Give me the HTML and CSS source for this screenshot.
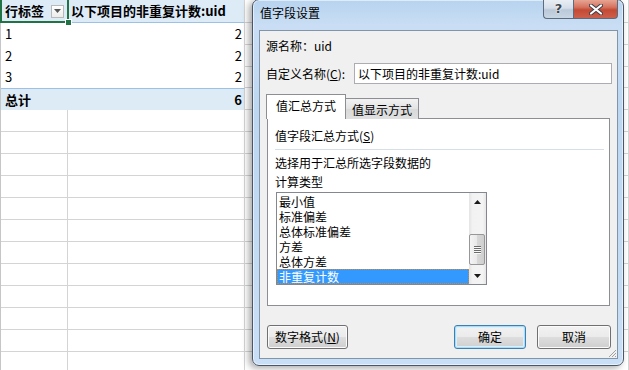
FILE: index.html
```html
<!DOCTYPE html>
<html lang="zh-CN">
<head>
<meta charset="utf-8">
<title>值字段设置</title>
<link rel="stylesheet" href="styles.css">
</head>
<body>
<div class="sheet">
  <div class="c hd first">行标签<span class="dd"><svg width="7" height="4" viewBox="0 0 7 4"><path d="M0 0H7L3.5 4Z" fill="#555"/></svg></span></div>
  <div class="c hd bcol bold">以下项目的非重复计数:uid</div>
  <div class="c g"></div>

  <div class="c">1</div><div class="c bcol num">2</div><div class="c g"></div>
  <div class="c">2</div><div class="c bcol num">2</div><div class="c g"></div>
  <div class="c">3</div><div class="c bcol num">2</div><div class="c g"></div>

  <div class="c tot bold">总计</div><div class="c tot bcol num bold">6</div><div class="c g"></div>

  <div class="c g"></div><div class="c g"></div><div class="c g"></div>
  <div class="c g"></div><div class="c g"></div><div class="c g"></div>
  <div class="c g"></div><div class="c g"></div><div class="c g"></div>
  <div class="c g"></div><div class="c g"></div><div class="c g"></div>
  <div class="c g"></div><div class="c g"></div><div class="c g"></div>
  <div class="c g"></div><div class="c g"></div><div class="c g"></div>
  <div class="c g"></div><div class="c g"></div><div class="c g"></div>
  <div class="c g"></div><div class="c g"></div><div class="c g"></div>
  <div class="c g"></div><div class="c g"></div><div class="c g"></div>
  <div class="c g"></div><div class="c g"></div><div class="c g"></div>
  <div class="c g"></div><div class="c g"></div><div class="c g"></div>
  <div class="c g"></div><div class="c g"></div><div class="c g"></div>
</div>
<div class="selbox"><span class="handle"></span></div>

<div class="dlg">
  <div class="titlebar">
    <span class="title">值字段设置</span>
    <div class="capbtns">
      <span class="help">?</span>
      <span class="close"><svg width="14" height="11" viewBox="0 0 14 11"><path d="M2 1.5L12 9.5M12 1.5L2 9.5" stroke="#3a3f4a" stroke-width="4" stroke-linecap="round"/><path d="M2 1.5L12 9.5M12 1.5L2 9.5" stroke="#fff" stroke-width="2.2" stroke-linecap="round"/></svg></span>
    </div>
  </div>
  <div class="client">
    <div class="src">源名称：uid</div>
    <div class="custom">
      <span class="lbl">自定义名称(<u>C</u>):</span>
      <div class="input">以下项目的非重复计数:uid</div>
    </div>
    <div class="tabs">
      <div class="tab on">值汇总方式</div>
      <div class="tab">值显示方式</div>
    </div>
    <div class="panel">
      <div class="group">值字段汇总方式(<u>S</u>)</div>
      <div class="sep"></div>
      <div class="desc">选择用于汇总所选字段数据的<br>计算类型</div>
      <div class="list">
        <div class="items">
          <div class="item"><span class="it">最小值</span></div>
          <div class="item"><span class="it">标准偏差</span></div>
          <div class="item"><span class="it">总体标准偏差</span></div>
          <div class="item"><span class="it">方差</span></div>
          <div class="item"><span class="it">总体方差</span></div>
          <div class="item selitem"><span class="it">非重复计数</span></div>
        </div>
        <div class="sb">
          <div class="arrow"><svg width="7" height="4" viewBox="0 0 7 4"><path d="M0 4H7L3.5 0Z" fill="#1a1a1a"/></svg></div>
          <div class="track t1"></div>
          <div class="thumb"><span></span><span></span><span></span><span></span></div>
          <div class="track t2"></div>
          <div class="arrow"><svg width="7" height="4" viewBox="0 0 7 4"><path d="M0 0H7L3.5 4Z" fill="#1a1a1a"/></svg></div>
        </div>
      </div>
    </div>
    <div class="btns">
      <div class="btn numfmt">数字格式(<u>N</u>)</div>
      <div class="spacer"></div>
      <div class="btn def">确定</div>
      <div class="btn cancel">取消</div>
    </div>
    <svg class="grip" width="9" height="9" viewBox="0 0 9 9"><path d="M8 1L1 8M8 4L4 8M8 7L7 8" stroke="#a0a0a0" stroke-width="1"/></svg>
  </div>
</div>
</body>
</html>
```

FILE: styles.css
```css
* { box-sizing: border-box; margin: 0; padding: 0; }

body {
  width: 629px;
  height: 370px;
  overflow: hidden;
  background: #fff;
  position: relative;
  font-family: "Noto Sans CJK SC", "Microsoft YaHei", sans-serif;
  color: #000;
}

/* ---------- spreadsheet ---------- */
.sheet {
  display: grid;
  grid-template-columns: 67px 177px 384px;
  grid-template-rows: 23px 22px 22px 21px 22px;
  grid-auto-rows: 22px;
  border-left: 1px solid #c6c6c6;
  font-size: 13px;
  line-height: 16px;
}

.c {
  display: flex;
  align-items: flex-end;
  padding: 0 3px 3px 4px;
  white-space: nowrap;
}

.hd {
  background: #ddebf7;
  border-bottom: 1px solid #9bc2e6;
  font-weight: bold;
  align-items: center;
  padding-bottom: 0;
}

.first { justify-content: space-between; padding-right: 4px; }

.dd {
  width: 13px;
  height: 13px;
  border: 1px solid #b9b9b9;
  background: linear-gradient(#ffffff, #ececec);
  display: flex;
  align-items: center;
  justify-content: center;
}

.bold { font-weight: bold; }

.bcol { border-right: 1px solid #d4d4d4; padding-left: 3px; }

.num { justify-content: flex-end; padding-right: 2px; }

.tot {
  background: #ddebf7;
  border-top: 1px solid #9bc2e6;
  align-items: center;
  padding-bottom: 0;
}

.g {
  border-right: 1px solid #d4d4d4;
  border-bottom: 1px solid #d4d4d4;
}

.selbox {
  position: absolute;
  left: 0;
  top: -2px;
  width: 69px;
  height: 25px;
  border: 2px solid #217346;
}

.handle {
  position: absolute;
  right: -5px;
  bottom: -5px;
  width: 7px;
  height: 7px;
  background: #217346;
  border: 1px solid #fff;
}

/* ---------- dialog ---------- */
.dlg {
  position: absolute;
  left: 252px;
  top: -1px;
  width: 372px;
  height: 367px;
  border: 1px solid #4a5768;
  border-radius: 7px;
  background: linear-gradient(180deg, #b7d3ef 0%, #c9def4 7%, #bdd7f1 30%, #c3dbf3 70%, #c9dff5 100%);
  box-shadow: -3px 2px 7px rgba(0, 0, 0, 0.35), inset 0 0 0 1px rgba(255, 255, 255, 0.55);
  padding: 0 5px 6px 6px;
  display: flex;
  flex-direction: column;
  font-size: 12px;
  line-height: 16px;
}

.titlebar {
  height: 30px;
  position: relative;
  padding: 5px 0 0 1px;
  flex: none;
}

.title { font-size: 12px; }

.capbtns {
  position: absolute;
  right: 0;
  top: 0;
  display: flex;
  height: 19px;
}

.help, .close {
  display: flex;
  align-items: center;
  justify-content: center;
  height: 19px;
  border: 1px solid #5d6b7c;
  border-top: none;
}

.help {
  width: 30px;
  border-radius: 0 0 0 4px;
  border-right: none;
  background: linear-gradient(#e9eef4 0%, #d5dee9 45%, #bac8d8 55%, #c9d6e4 100%);
  font-family: "DejaVu Sans", sans-serif;
  font-weight: bold;
  font-size: 13px;
  color: #40484f;
  text-shadow: 0 0 2px #fff, 0 0 1px #fff;
  padding-bottom: 1px;
}

.close {
  width: 45px;
  border-radius: 0 0 4px 0;
  background: linear-gradient(#e7a593 0%, #d5735f 40%, #c44a35 55%, #cd5f4a 100%);
}

.client {
  flex: 1;
  position: relative;
  background: #f0f0f0;
  border: 1px solid #8294aa;
  padding: 0 5px 0 6px;
  display: flex;
  flex-direction: column;
}

.src { margin-top: 7px; height: 16px; }

.custom {
  margin-top: 9px;
  height: 21px;
  display: flex;
  align-items: center;
  justify-content: space-between;
}

.input {
  width: 258px;
  height: 21px;
  background: #fff;
  border: 1px solid #abadb3;
  padding: 2px 0 0 3px;
  font-size: 12px;
}

.tabs {
  margin-top: 10px;
  height: 25px;
  display: flex;
  align-items: flex-end;
  position: relative;
  z-index: 2;
}

.tab {
  height: 21px;
  width: 73px;
  border: 1px solid #8c8e94;
  border-bottom: none;
  border-left: none;
  background: linear-gradient(#f2f2f2, #e3e3e3 50%, #d9d9d9 51%, #e0e0e0);
  display: flex;
  align-items: center;
  justify-content: center;
  padding-top: 1px;
}

.tab.on {
  height: 25px;
  width: 80px;
  border-left: 1px solid #8c8e94;
  background: #fff;
  padding-top: 0;
  padding-bottom: 2px;
}

.panel {
  margin: -1px 2px 0 1px;
  height: 188px;
  background: #fff;
  border: 1px solid #8c8e94;
  padding: 9px 5px 0 7px;
  display: flex;
  flex-direction: column;
  position: relative;
  z-index: 1;
}

.group { height: 16px; }

.sep {
  margin-top: 5px;
  height: 1px;
  background: #d5dfe5;
}

.desc {
  margin-top: 3px;
  line-height: 19px;
}

.list {
  margin: 1px 0 0 1px;
  width: 211px;
  height: 93px;
  border: 1px solid #828790;
  display: flex;
}

.items {
  width: 192px;
  padding-top: 1px;
}

.item {
  height: 15px;
  padding-left: 2px;
  white-space: nowrap;
  overflow: hidden;
}

.it {
  display: inline-block;
  height: 13px;
  line-height: 13px;
  font-size: 12px;
  margin-top: 1px;
  vertical-align: top;
}

.selitem {
  background: #3399ff;
  color: #fff;
  border: 1px dotted #c98a3e;
  padding-left: 1px;
}

.selitem .it { margin-top: 0; }

.sb {
  width: 17px;
  display: flex;
  flex-direction: column;
  background: linear-gradient(90deg, #e3e3e3 0%, #f2f2f2 20%, #f4f4f4 80%, #e6e6e6 100%);
}

.arrow {
  height: 17px;
  display: flex;
  align-items: center;
  justify-content: center;
}

.t1 { height: 24px; }
.t2 { height: 2px; }

.thumb {
  height: 31px;
  margin: 0 1px 0 0;
  border: 1px solid #979797;
  border-radius: 2px;
  background: linear-gradient(90deg, #f4f4f4 0%, #e9e9e9 50%, #d8d8d8 51%, #cfcfcf 100%);
  display: flex;
  flex-direction: column;
  align-items: center;
  justify-content: center;
  gap: 1px;
}

.thumb span {
  width: 7px;
  height: 1px;
  background: #6c6c6c;
  box-shadow: 0 1px 0 #fafafa;
}

.btns {
  margin-top: 19px;
  height: 24px;
  display: flex;
  gap: 11px;
}

.spacer { flex: 1; }

.btn {
  height: 24px;
  border: 1px solid #707070;
  border-radius: 3px;
  background: linear-gradient(#f2f2f2 0%, #ebebeb 48%, #dddddd 52%, #cfcfcf 100%);
  box-shadow: inset 0 0 0 1px #fbfbfb;
  display: flex;
  align-items: center;
  justify-content: center;
  padding-bottom: 1px;
}

.numfmt { width: 81px; margin-left: 1px; }
.def {
  width: 72px;
  border-color: #3c7fb1;
  box-shadow: inset 0 0 0 1px #a8dcf7, inset 0 0 0 2px #d9f0fc;
}
.cancel { width: 74px; margin-right: 1px; }

.grip {
  position: absolute;
  right: 0;
  bottom: 0;
}
```
